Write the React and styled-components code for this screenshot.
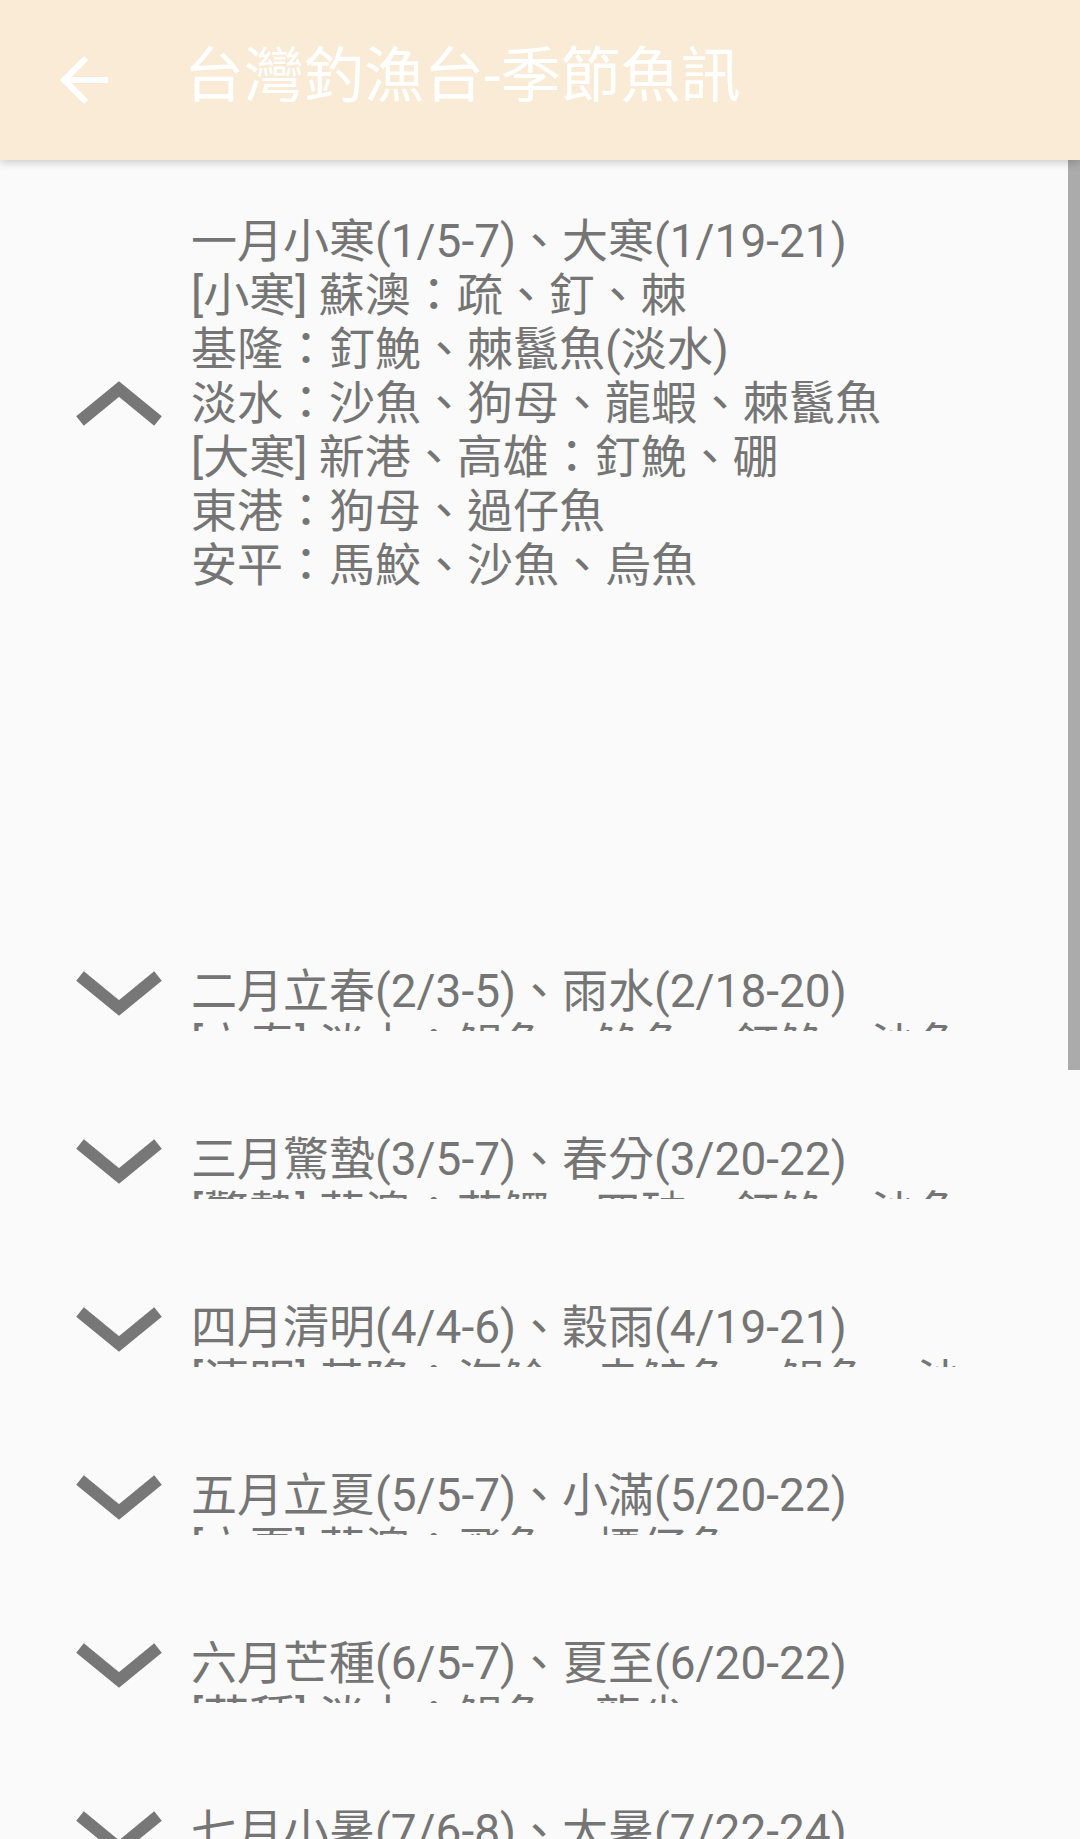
import React from 'react';
import styled, { createGlobalStyle } from 'styled-components';

const GlobalStyle = createGlobalStyle`
  html, body {
    margin: 0;
    padding: 0;
    background: #fafafa;
  }
  body {
    font-family: Roboto, "Noto Sans CJK TC", sans-serif;
  }
`;

const Screen = styled.div`
  width: 1080px;
  height: 1839px;
  display: flex;
  flex-direction: column;
  overflow: hidden;
  background: #fafafa;
`;

const AppBar = styled.header`
  flex: none;
  box-sizing: border-box;
  height: 160px;
  display: flex;
  align-items: center;
  gap: 64px;
  padding-left: 48px;
  background: #faebd7;
  box-shadow: 0 3px 8px rgba(0, 0, 0, 0.18);
  position: relative;
  z-index: 2;
`;

const BackButton = styled.button`
  flex: none;
  width: 72px;
  height: 72px;
  padding: 0;
  border: 0;
  background: none;
  display: flex;
  color: #ffffff;
  svg {
    width: 72px;
    height: 72px;
  }
`;

const Title = styled.h1`
  margin: -6px 0 0;
  font-family: Roboto, "Noto Sans CJK TC", sans-serif;
  font-weight: 400;
  font-size: 60px;
  line-height: 1;
  color: #ffffff;
  white-space: nowrap;
`;

const Body = styled.main`
  flex: 1;
  position: relative;
  overflow: hidden;
`;

const List = styled.ul`
  list-style: none;
  margin: 0;
  padding: 0;
`;

const Item = styled.li`
  display: flex;
  align-items: center;
  gap: 27px;
  padding: ${(p) => (p.$open ? '54px 95px 319px 74px' : '53px 95px 48px 74px')};
`;

const Chevron = styled.svg`
  flex: none;
  width: 90px;
  height: 48px;
  filter: blur(0.7px);
  transform: translateY(${(p) => (p.$open ? 0 : -4)}px);
`;

const Text = styled.div`
  flex: 1;
  min-width: 0;
  font-family: Roboto, "Noto Sans CJK TC", sans-serif;
  font-size: 46px;
  line-height: 54px;
  color: #757575;
  white-space: pre-wrap;
  overflow: hidden;
  max-height: ${(p) => (p.$open ? 'none' : '67px')};
`;

const ScrollThumb = styled.div`
  position: absolute;
  top: 0;
  right: 0;
  width: 12px;
  height: 910px;
  background: #ababab;
`;

const seasons = [
  {
    title: '一月小寒(1/5-7)、大寒(1/19-21)',
    lines: [
      '[小寒] 蘇澳：疏、釘、棘',
      '基隆：釘鮸、棘鬣魚(淡水)',
      '淡水：沙魚、狗母、龍蝦、棘鬣魚',
      '[大寒] 新港、高雄：釘鮸、硼',
      '東港：狗母、過仔魚',
      '安平：馬鮫、沙魚、烏魚',
    ],
  },
  {
    title: '二月立春(2/3-5)、雨水(2/18-20)',
    lines: ['[立春] 淡水：鯧魚、鮸魚、釘鮸、沙魚', '[雨水] 基隆：釘鮸、白帶魚'],
  },
  {
    title: '三月驚蟄(3/5-7)、春分(3/20-22)',
    lines: ['[驚蟄] 蘇澳：花鰹、四破、釘鮸、沙魚', '[春分] 淡水：鯧魚、白帶魚'],
  },
  {
    title: '四月清明(4/4-6)、穀雨(4/19-21)',
    lines: ['[清明] 基隆：海鯰、赤鯮魚、鯧魚、沙魚', '[穀雨] 淡水：鯧魚、黑鯛'],
  },
  {
    title: '五月立夏(5/5-7)、小滿(5/20-22)',
    lines: ['[立夏] 蘇澳：飛魚、標仔魚', '[小滿] 基隆：鰹魚、飛魚'],
  },
  {
    title: '六月芒種(6/5-7)、夏至(6/20-22)',
    lines: ['[芒種] 淡水：鯧魚、龍尖', '[夏至] 基隆：鰹魚、鬼頭刀'],
  },
  {
    title: '七月小暑(7/6-8)、大暑(7/22-24)',
    lines: ['[小暑] 蘇澳：鬼頭刀、飛魚', '[大暑] 基隆：鰹魚、白帶魚'],
  },
  {
    title: '八月立秋(8/7-9)、處暑(8/22-24)',
    lines: ['[立秋] 淡水：白帶魚、鯧魚'],
  },
];

function ChevronIcon({ open }) {
  return (
    <Chevron $open={open} viewBox="0 0 90 48" aria-hidden="true">
      <polyline
        points={open ? '6,42 45,10 84,42' : '6,6 45,38 84,6'}
        fill="none"
        stroke="#777777"
        strokeWidth="12"
        strokeLinejoin="miter"
        strokeLinecap="butt"
      />
    </Chevron>
  );
}

export default function App() {
  return (
    <>
      <GlobalStyle />
      <Screen>
        <AppBar>
          <BackButton aria-label="返回">
            <svg viewBox="0 0 24 24">
              <path fill="currentColor" d="M20 11H7.83l5.59-5.59L12 4l-8 8 8 8 1.41-1.41L7.83 13H20v-2z" />
            </svg>
          </BackButton>
          <Title>台灣釣漁台-季節魚訊</Title>
        </AppBar>
        <Body>
          <List>
            {seasons.map((s, i) => {
              const open = i === 0;
              return (
                <Item key={s.title} $open={open}>
                  <ChevronIcon open={open} />
                  <Text $open={open}>{[s.title, ...s.lines].join('\n')}</Text>
                </Item>
              );
            })}
          </List>
          <ScrollThumb />
        </Body>
      </Screen>
    </>
  );
}
